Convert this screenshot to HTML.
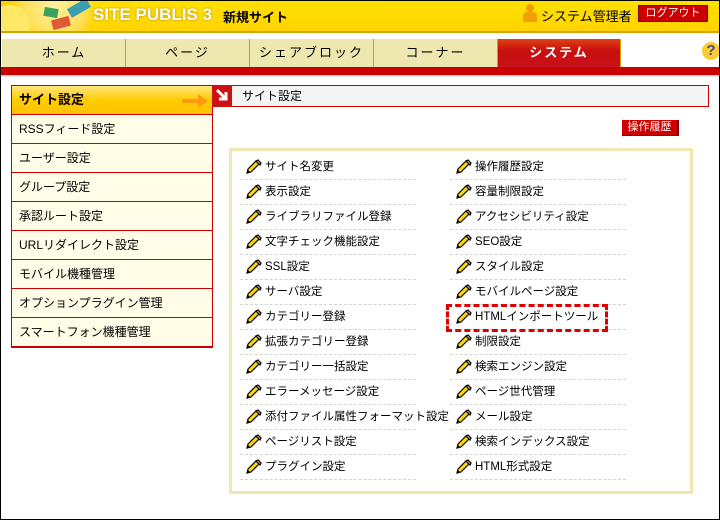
<!DOCTYPE html>
<html><head><meta charset="utf-8"><style>
*{margin:0;padding:0;box-sizing:border-box}
body{width:720px;height:520px;overflow:hidden;background:#fff;font-family:"Liberation Sans","Noto Sans CJK JP",sans-serif;font-size:12px;color:#000;position:relative}
.frame{position:absolute;left:0;top:0;width:720px;height:520px;border:1px solid #000;pointer-events:none;z-index:10}
.hdr{position:absolute;left:0;top:0;width:720px;height:33px;background:linear-gradient(#ffe000,#ffd400);border-bottom:2px solid #d9a300}
.logo{position:absolute;left:0;top:0;width:92px;height:31px;background:radial-gradient(circle at 55px 5px,#fff2a0 0,#ffe05a 30px,#ffd000 45px);overflow:hidden}
.abs{position:absolute}
.tabs{position:absolute;top:39px;left:2px;height:29px}
.tab{position:absolute;top:0;height:29px;background:#eee8b0;border-left:1px solid #d4a000;border-bottom:1px solid #d4a000;text-align:center;line-height:27px;font-size:13px;letter-spacing:2px}
.redbar{position:absolute;left:0;top:67px;width:720px;height:8px;background:#cc0000;box-shadow:0 1px 2px #bbb}
.side{position:absolute;left:11px;top:85px;width:202px;border:1px solid #cc0000;border-bottom-width:2px;background:#fffde8}
.side div{height:29px;line-height:28px;padding-left:7px;border-top:1px solid #cc0000;font-size:12px}
.side div:first-child{border-top:none;background:linear-gradient(#ffe680,#ffcc00 50%,#ffc200);font-weight:bold;font-size:13px;height:28px}
.box{position:absolute;left:229px;top:148px;width:464px;height:346px;border:3px solid #eee8b0}
.item{position:absolute;height:25px;line-height:24px;border-bottom:1px dashed #d4d4d4;font-size:11.5px;white-space:nowrap}
.item svg{position:absolute;left:5px;top:4px}
.item span{position:absolute;left:25px}
</style></head><body>
<div class="hdr">
 <div class="logo">
  <div class="abs" style="left:-10px;top:5px;width:40px;height:40px;border-radius:50%;background:#ffe866"></div>
  <div class="abs" style="left:68px;top:3px;width:22px;height:10px;background:#3aa0b0;transform:rotate(-30deg)"></div>
  <div class="abs" style="left:44px;top:8px;width:14px;height:9px;background:#3ca060;transform:rotate(10deg)"></div>
  <div class="abs" style="left:52px;top:18px;width:18px;height:10px;background:#e05a3a;transform:rotate(-15deg)"></div>
 </div>
 <div class="abs" style="left:93px;top:5px;font-size:17px;font-weight:bold;color:#fff;text-shadow:0 0 2px #b08000">SITE PUBLIS 3</div>
 <div class="abs" style="left:223px;top:7px;font-size:13px;font-weight:bold">新規サイト</div>
 <div class="abs" style="left:526px;top:4px;width:8px;height:8px;border-radius:50%;background:#f0a000"></div>
 <div class="abs" style="left:523px;top:12px;width:14px;height:10px;border-radius:4px 4px 0 0;background:#f0a000"></div>
 <div class="abs" style="left:541px;top:6px;font-size:13px">システム管理者</div>
 <div class="abs" style="left:638px;top:5px;width:70px;height:17px;background:#cc0000;border:1px solid #800;color:#fff;font-size:11px;text-align:center;line-height:15px">ログアウト</div>
</div>
<div class="tabs">
 <div class="tab" style="left:0;width:124px;border-left:none">ホーム</div>
 <div class="tab" style="left:123px;width:124px">ページ</div>
 <div class="tab" style="left:247px;width:124px">シェアブロック</div>
 <div class="tab" style="left:371px;width:124px">コーナー</div>
 <div class="tab" style="left:495px;width:124px;background:linear-gradient(#e04010,#c81010 40%,#c8101a);color:#fff;font-weight:bold;border-right:1px solid #d4a000;border-bottom:none">システム</div>
</div>
<div class="abs" style="left:702px;top:42px;width:18px;height:18px;border-radius:50%;background:#ffcc33;color:#3050a0;font-weight:bold;font-size:15px;text-align:center;line-height:18px">?</div>
<div class="redbar"></div>
<div class="side">
 <div>サイト設定<svg class="abs" style="left:170px;top:8px" width="26" height="14"><path d="M0 5h16V0l10 7-10 7V9H0z" fill="#ff9a10"/></svg></div>
 <div>RSSフィード設定</div><div>ユーザー設定</div><div>グループ設定</div><div>承認ルート設定</div><div>URLリダイレクト設定</div><div>モバイル機種管理</div><div>オプションプラグイン管理</div><div>スマートフォン機種管理</div>
</div>
<div class="abs" style="left:212px;top:85px;width:497px;height:22px;border:1px solid #cc0000;background:#f4f4f4"></div>
<div class="abs" style="left:212px;top:85px;width:20px;height:22px;background:#cc1111"><svg width="20" height="22"><path d="M5 5l9 9M14 7v7H7" stroke="#fff" stroke-width="3" fill="none"/></svg></div>
<div class="abs" style="left:242px;top:87px;font-size:12px">サイト設定</div>
<div class="abs" style="left:622px;top:120px;width:57px;height:16px;background:#cc0000;border-right:2px solid #800;border-bottom:1px solid #800;color:#fff;font-size:11px;text-align:center;line-height:15px">操作履歴</div>
<div class="box"></div>
<div id="items"></div>
<div class="abs" style="left:446px;top:304px;width:162px;height:28px;border:3px dashed #e00000"></div>
<div class="frame"></div>
<script>
var c1=["サイト名変更","表示設定","ライブラリファイル登録","文字チェック機能設定","SSL設定","サーバ設定","カテゴリー登録","拡張カテゴリー登録","カテゴリー一括設定","エラーメッセージ設定","添付ファイル属性フォーマット設定","ページリスト設定","プラグイン設定"];
var c2=["操作履歴設定","容量制限設定","アクセシビリティ設定","SEO設定","スタイル設定","モバイルページ設定","HTMLインポートツール","制限設定","検索エンジン設定","ページ世代管理","メール設定","検索インデックス設定","HTML形式設定"];
var pen='<svg width="17" height="16" viewBox="0 0 17 16"><path d="M2 14l1-4 8-8 3 3-8 8z" fill="#ffd800" stroke="#000" stroke-width="1.2"/><path d="M11 2l2-1 3 3-1 2z" fill="#f0b0a0" stroke="#000" stroke-width="1.2"/><path d="M2 14l1-3 2 2z" fill="#000"/></svg>';
var h="";
for(var i=0;i<13;i++){var t=155+25*i;
h+='<div class="item" style="left:240px;top:'+t+'px;width:176px">'+pen+'<span>'+c1[i]+'</span></div>';
h+='<div class="item" style="left:450px;top:'+t+'px;width:176px">'+pen+'<span>'+c2[i]+'</span></div>';}
document.getElementById("items").innerHTML=h;
</script>
</body></html>
